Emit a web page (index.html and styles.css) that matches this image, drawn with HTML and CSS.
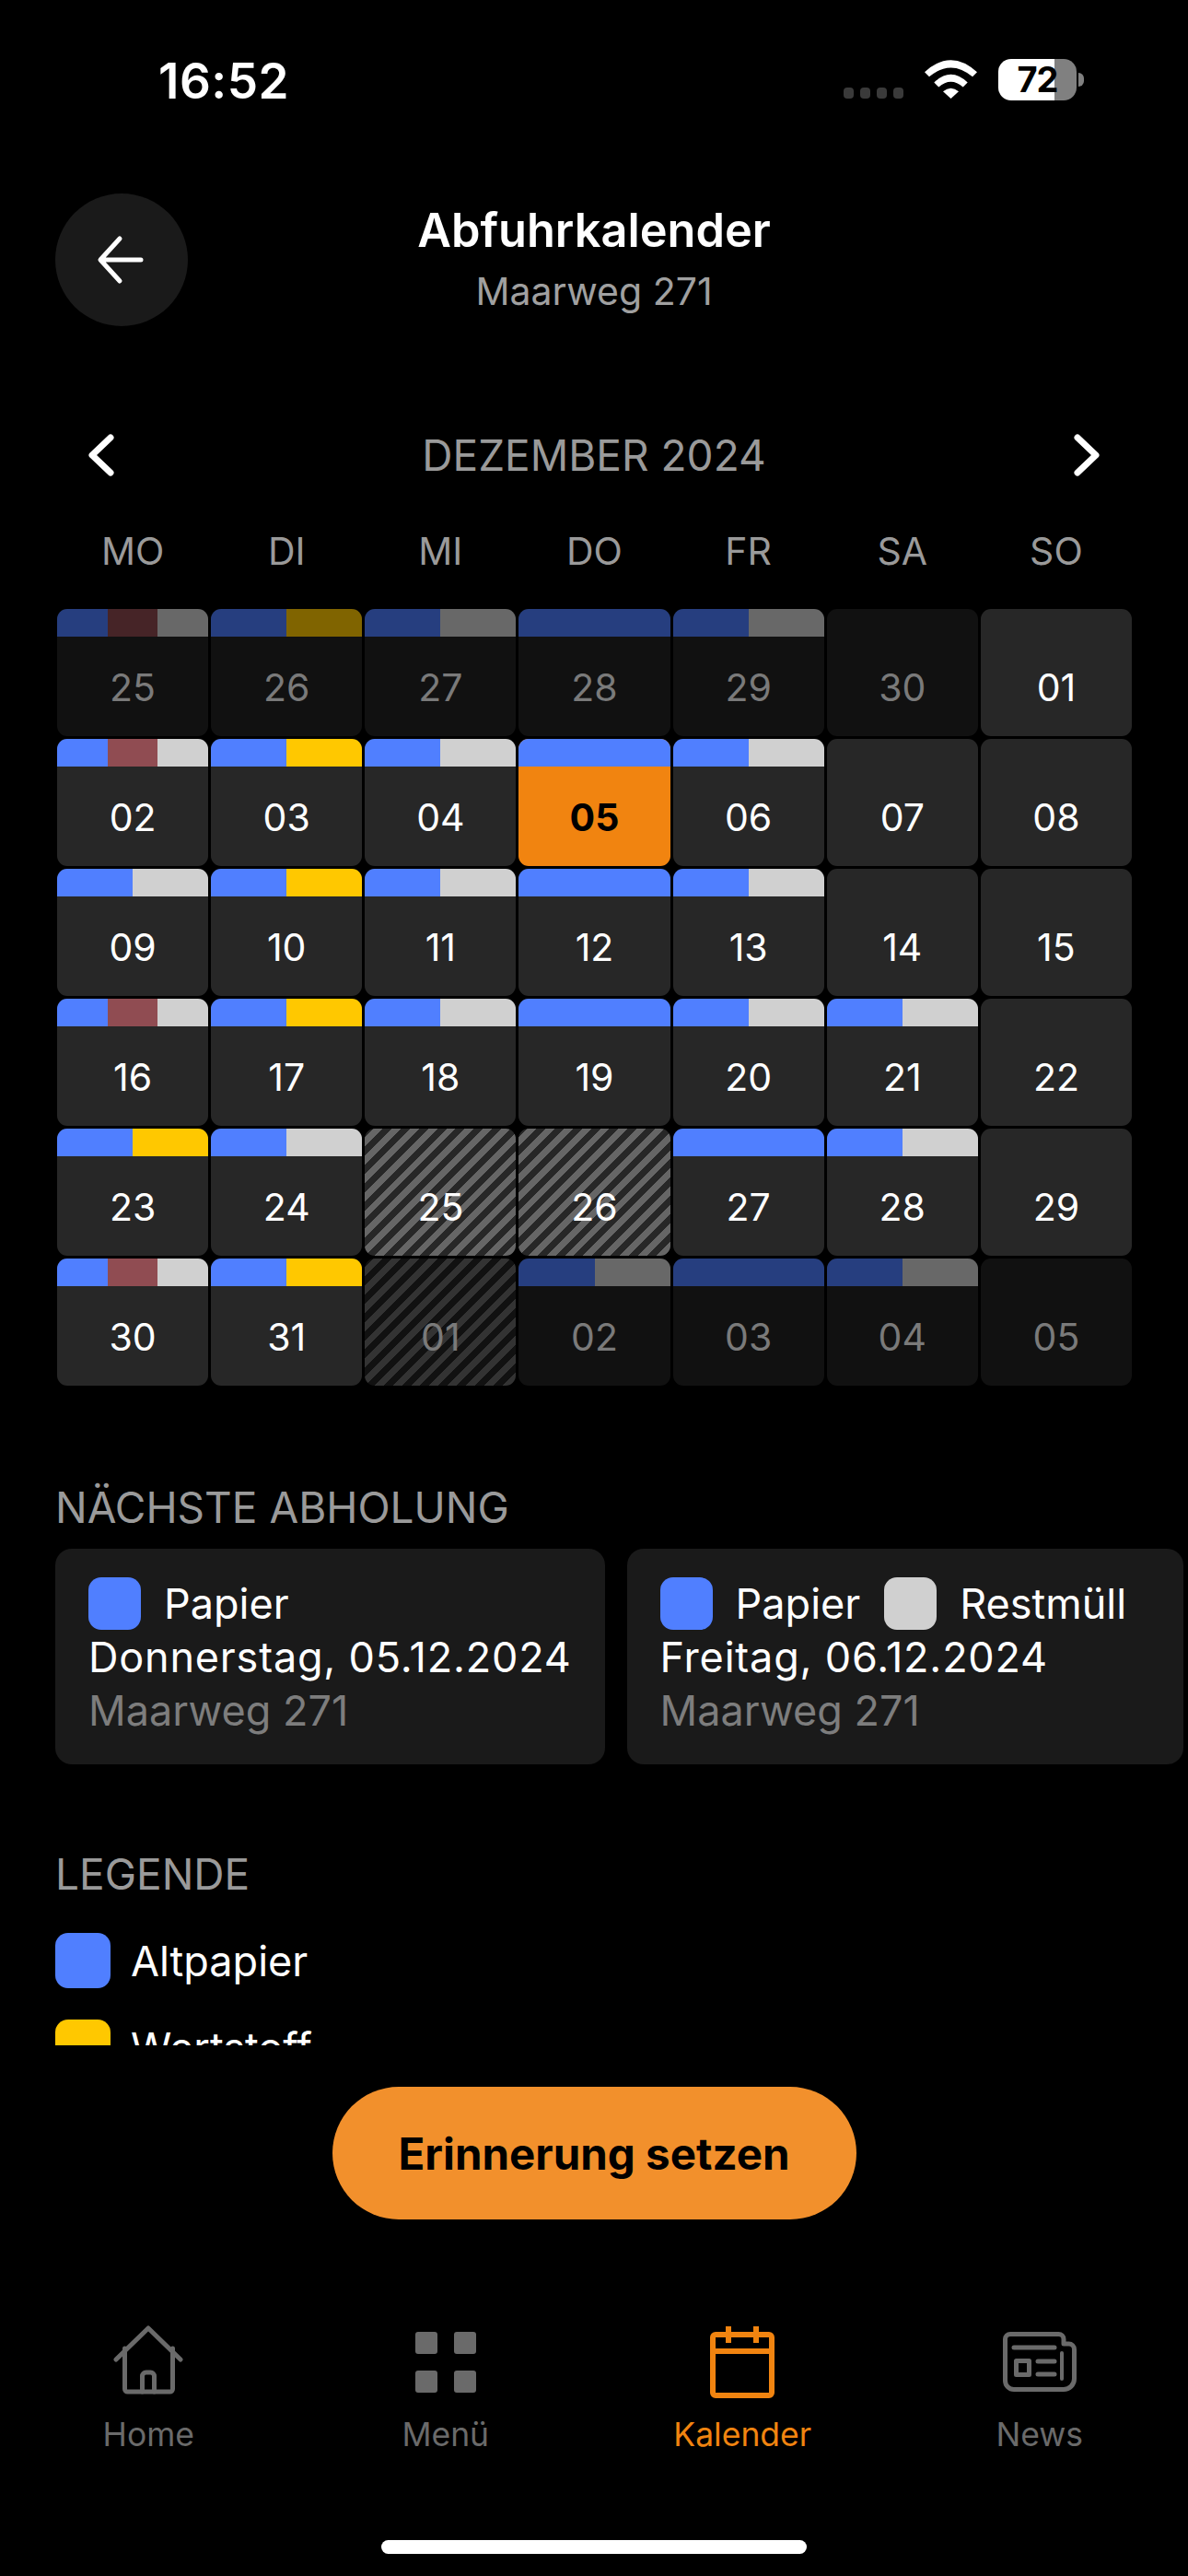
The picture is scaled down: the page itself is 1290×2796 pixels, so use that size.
FILE: index.html
```html
<!DOCTYPE html>
<html lang="de">
<head>
  <meta charset="UTF-8" />
  <title>Abfuhrkalender</title>
  <meta name="viewport" content="width=device-width, initial-scale=1" />
  <link rel="stylesheet" href="styles.css">
</head>
<body>
  <div class="app">
    <div class="statusbar">
      <span class="clock">16:52</span>
      <div class="status-icons">
        <div class="signal"><i></i><i></i><i></i><i></i></div>
        <svg class="wifi" width="57" height="42" viewBox="0 0 57 42" fill="#fff">
          <path d="M0 13.3 Q28.5 -13 57 13.3 L52 18.3 Q28.5 -1.5 5 18.3 Z" />
          <path d="M10.3 24.5 Q28.5 7 46.7 24.5 L41.7 29.5 Q28.5 18 15.3 29.5 Z" />
          <path d="M20 34.3 Q28.5 27 37 34.3 L28.5 42 Z" />
        </svg>
        <div class="battery"><div class="battery-body"><span>72</span></div><div class="battery-nub"></div></div>
      </div>
    </div>

    <div class="scroll">
      <header class="header">
        <button class="back" type="button">
          <svg width="56" height="56" viewBox="0 0 56 56" fill="none" stroke="#fff" stroke-width="5" stroke-linecap="round" stroke-linejoin="round">
            <path d="M28 5 L7 28 L28 51 M8 28 H51" />
          </svg>
        </button>
        <div class="title">
          <h1>Abfuhrkalender</h1>
          <p>Maarweg 271</p>
        </div>
      </header>

      <div class="month">
        <svg width="32" height="46" viewBox="0 0 32 46" fill="none" stroke="#fff" stroke-width="7" stroke-linecap="round" stroke-linejoin="round"><path d="M26 4 L6 23 L26 42" /></svg>
        <span>DEZEMBER 2024</span>
        <svg width="32" height="46" viewBox="0 0 32 46" fill="none" stroke="#fff" stroke-width="7" stroke-linecap="round" stroke-linejoin="round"><path d="M6 4 L26 23 L6 42" /></svg>
      </div>

      <div class="weekdays">
        <span>MO</span><span>DI</span><span>MI</span><span>DO</span><span>FR</span><span>SA</span><span>SO</span>
      </div>

      <div class="calendar">
        <div class="cell dim"><div class="band"><i class="b"></i><i class="r"></i><i class="g"></i></div><span>25</span></div>
        <div class="cell dim"><div class="band"><i class="b"></i><i class="y"></i></div><span>26</span></div>
        <div class="cell dim"><div class="band"><i class="b"></i><i class="g"></i></div><span>27</span></div>
        <div class="cell dim"><div class="band"><i class="b"></i></div><span>28</span></div>
        <div class="cell dim"><div class="band"><i class="b"></i><i class="g"></i></div><span>29</span></div>
        <div class="cell dim"><span>30</span></div>
        <div class="cell"><span>01</span></div>

        <div class="cell"><div class="band"><i class="b"></i><i class="r"></i><i class="g"></i></div><span>02</span></div>
        <div class="cell"><div class="band"><i class="b"></i><i class="y"></i></div><span>03</span></div>
        <div class="cell"><div class="band"><i class="b"></i><i class="g"></i></div><span>04</span></div>
        <div class="cell today"><div class="band"><i class="b"></i></div><span>05</span></div>
        <div class="cell"><div class="band"><i class="b"></i><i class="g"></i></div><span>06</span></div>
        <div class="cell"><span>07</span></div>
        <div class="cell"><span>08</span></div>

        <div class="cell"><div class="band"><i class="b"></i><i class="g"></i></div><span>09</span></div>
        <div class="cell"><div class="band"><i class="b"></i><i class="y"></i></div><span>10</span></div>
        <div class="cell"><div class="band"><i class="b"></i><i class="g"></i></div><span>11</span></div>
        <div class="cell"><div class="band"><i class="b"></i></div><span>12</span></div>
        <div class="cell"><div class="band"><i class="b"></i><i class="g"></i></div><span>13</span></div>
        <div class="cell"><span>14</span></div>
        <div class="cell"><span>15</span></div>

        <div class="cell"><div class="band"><i class="b"></i><i class="r"></i><i class="g"></i></div><span>16</span></div>
        <div class="cell"><div class="band"><i class="b"></i><i class="y"></i></div><span>17</span></div>
        <div class="cell"><div class="band"><i class="b"></i><i class="g"></i></div><span>18</span></div>
        <div class="cell"><div class="band"><i class="b"></i></div><span>19</span></div>
        <div class="cell"><div class="band"><i class="b"></i><i class="g"></i></div><span>20</span></div>
        <div class="cell"><div class="band"><i class="b"></i><i class="g"></i></div><span>21</span></div>
        <div class="cell"><span>22</span></div>

        <div class="cell"><div class="band"><i class="b"></i><i class="y"></i></div><span>23</span></div>
        <div class="cell"><div class="band"><i class="b"></i><i class="g"></i></div><span>24</span></div>
        <div class="cell hatch"><span>25</span></div>
        <div class="cell hatch"><span>26</span></div>
        <div class="cell"><div class="band"><i class="b"></i></div><span>27</span></div>
        <div class="cell"><div class="band"><i class="b"></i><i class="g"></i></div><span>28</span></div>
        <div class="cell"><span>29</span></div>

        <div class="cell"><div class="band"><i class="b"></i><i class="r"></i><i class="g"></i></div><span>30</span></div>
        <div class="cell"><div class="band"><i class="b"></i><i class="y"></i></div><span>31</span></div>
        <div class="cell dim hatch"><span>01</span></div>
        <div class="cell dim"><div class="band"><i class="b"></i><i class="g"></i></div><span>02</span></div>
        <div class="cell dim"><div class="band"><i class="b"></i></div><span>03</span></div>
        <div class="cell dim"><div class="band"><i class="b"></i><i class="g"></i></div><span>04</span></div>
        <div class="cell dim"><span>05</span></div>
      </div>

      <h2 class="section next-title">NÄCHSTE ABHOLUNG</h2>
      <div class="pickups">
        <div class="pickup">
          <div class="chips">
            <div class="chip"><i class="swatch b"></i>Papier</div>
          </div>
          <div class="date">Donnerstag, 05.12.2024</div>
          <div class="addr">Maarweg 271</div>
        </div>
        <div class="pickup">
          <div class="chips">
            <div class="chip"><i class="swatch b"></i>Papier</div>
            <div class="chip"><i class="swatch g"></i>Restmüll</div>
          </div>
          <div class="date">Freitag, 06.12.2024</div>
          <div class="addr">Maarweg 271</div>
        </div>
      </div>

      <h2 class="section legend-title">LEGENDE</h2>
      <div class="legend">
        <div class="legend-item"><i class="swatch b"></i>Altpapier</div>
        <div class="legend-item"><i class="swatch y"></i>Wertstoff</div>
      </div>
    </div>

    <div class="action">
      <button class="remind" type="button">Erinnerung setzen</button>
    </div>

    <nav class="tabs">
      <div class="tab">
        <svg width="84" height="84" viewBox="0 0 84 84" fill="none" stroke="currentColor" stroke-width="5" stroke-linecap="round" stroke-linejoin="round">
          <path d="M7 39 L42 5 L77 39" />
          <path d="M16.5 27 V71 a3 3 0 0 0 3 3 H65.5 a3 3 0 0 0 3-3 V27" />
          <path d="M35.5 74 V57 a4 4 0 0 1 4-4 H44.5 a4 4 0 0 1 4 4 V74" />
        </svg>
        <span>Home</span>
      </div>
      <div class="tab">
        <svg width="84" height="84" viewBox="0 0 84 84" fill="currentColor">
          <rect x="9" y="9" width="24" height="24" rx="3" />
          <rect x="51" y="9" width="24" height="24" rx="3" />
          <rect x="9" y="51" width="24" height="24" rx="3" />
          <rect x="51" y="51" width="24" height="24" rx="3" />
        </svg>
        <span>Menü</span>
      </div>
      <div class="tab active">
        <svg width="84" height="84" viewBox="0 0 84 84" fill="none" stroke="currentColor" stroke-width="6">
          <rect x="10" y="12" width="64" height="66" rx="3" />
          <path d="M10 30 H74" />
          <path d="M27 3 V21 M57 3 V21" />
        </svg>
        <span>Kalender</span>
      </div>
      <div class="tab">
        <svg width="84" height="84" viewBox="0 0 84 84" fill="none" stroke="currentColor" stroke-width="5" stroke-linecap="round" stroke-linejoin="round">
          <path d="M14 71.5 H68 a11.5 11.5 0 0 0 11.5-11.5 V28 a6 6 0 0 0-6-6 H68 V17 a5.5 5.5 0 0 0-5.5-5.5 H10 a5.5 5.5 0 0 0-5.5 5.5 V62 a9.5 9.5 0 0 0 9.5 9.5 Z" />
          <path d="M14 26 H58 M40 41 H58 M40 55 H58" />
          <rect x="16.5" y="40.5" width="14" height="15" />
          <path d="M66 32 V60" stroke-width="4" />
        </svg>
        <span>News</span>
      </div>
    </nav>

    <div class="home-bar"></div>
  </div>
</body>
</html>
```

FILE: styles.css
```css
body {
  margin: 0;
  background: #000;
  font-family: Inter, 'Noto Sans', sans-serif;
  color: #fff;
}

.app {
  width: 1290px;
  height: 2796px;
  display: flex;
  flex-direction: column;
  overflow: hidden;
  background: #000;
}

i {
  display: block;
}

/* status bar */
.statusbar {
  height: 130px;
  flex: none;
  box-sizing: border-box;
  padding: 60px 113px 0 172px;
  display: flex;
  justify-content: space-between;
  align-items: flex-start;
}

.clock {
  font-size: 53px;
  line-height: 56px;
  font-weight: 600;
  letter-spacing: 0.5px;
}

.status-icons {
  display: flex;
  align-items: flex-start;
  padding-top: 4px;
}

.signal {
  display: flex;
  gap: 7px;
  margin: 31px 23px 0 0;
}

.signal i {
  width: 11px;
  height: 12px;
  border-radius: 4px;
  background: #3a3a3a;
}

.wifi {
  margin: 1px 23px 0 0;
}

.battery {
  display: flex;
  align-items: center;
  gap: 2px;
}

.battery-body {
  width: 85px;
  height: 45px;
  border-radius: 14px;
  background: linear-gradient(90deg, #fff 61px, #808080 61px);
  color: #000;
  font-size: 38px;
  font-weight: 700;
  line-height: 45px;
  text-align: center;
  letter-spacing: -1px;
}

.battery-nub {
  width: 6px;
  height: 15px;
  border-radius: 0 8px 8px 0;
  background: #808080;
}

/* scrolling content */
.scroll {
  height: 2090px;
  flex: none;
  box-sizing: border-box;
  padding-top: 80px;
  overflow: hidden;
}

.header {
  display: grid;
  grid-template-columns: 144px 1fr 144px;
  padding: 0 60px;
  height: 144px;
}

.back {
  width: 144px;
  height: 144px;
  border: none;
  border-radius: 50%;
  background: #1a1a1a;
  padding: 0 4px 0 0;
  display: flex;
  align-items: center;
  justify-content: center;
}

.title {
  text-align: center;
}

.title h1 {
  margin: 12px 0 0;
  font-size: 50.5px;
  line-height: 56px;
  font-weight: 600;
}

.title p {
  margin: 12px 0 0;
  font-size: 41px;
  line-height: 52px;
  color: #a0a0a0;
}

.month {
  margin-top: 114px;
  height: 52px;
  padding: 0 94px;
  display: flex;
  justify-content: space-between;
  align-items: center;
  font-size: 46px;
  color: #9a9a9a;
}

.weekdays {
  margin-top: 54px;
  padding: 0 61px 0 62px;
  display: grid;
  grid-template-columns: repeat(7, 1fr);
  column-gap: 3px;
  font-size: 41px;
  line-height: 48px;
  text-align: center;
  color: #9a9a9a;
}

/* calendar grid */
.calendar {
  margin-top: 39px;
  padding: 0 61px 0 62px;
  display: grid;
  grid-template-columns: repeat(7, 1fr);
  grid-auto-rows: 138px;
  gap: 3px;
}

.cell {
  position: relative;
  background: #272727;
  border-radius: 11px;
  overflow: hidden;
  box-sizing: border-box;
  padding-top: 32px;
  display: flex;
  align-items: center;
  justify-content: center;
  font-size: 41px;
}

.band {
  position: absolute;
  top: 0;
  left: 0;
  right: 0;
  height: 30px;
  display: flex;
}

.band i {
  flex: 1;
}

.b { background: #507fff; }
.r { background: #904c52; }
.g { background: #d0d0d0; }
.y { background: #ffc800; }

.cell.dim {
  background: #111;
  color: #7a7a7a;
}

.dim .b { background: #263e7f; }
.dim .r { background: #462427; }
.dim .g { background: #686868; }
.dim .y { background: #806400; }

.cell.today {
  background: #f18410;
  color: #000;
  font-weight: 700;
}

.cell.hatch {
  background: repeating-linear-gradient(135deg, #272727 0 7px, #666 7px 14px);
}

.cell.dim.hatch {
  background: repeating-linear-gradient(135deg, #111 0 7px, #333 7px 14px);
}

/* sections */
.section {
  margin: 0;
  padding: 0 0 0 60px;
  font-size: 46px;
  line-height: 50px;
  font-weight: 400;
  color: #9a9a9a;
}

.next-title {
  margin-top: 107px;
}

.legend-title {
  margin-top: 94px;
}

.pickups {
  margin-top: 20px;
  padding-left: 60px;
  display: flex;
  gap: 24px;
}

.pickup {
  flex: none;
  box-sizing: border-box;
  height: 234px;
  padding: 31px 36px 0 36px;
  border-radius: 18px;
  background: #1a1a1a;
  font-size: 45px;
  line-height: 58px;
}

.chips {
  display: flex;
  height: 57px;
}

.chip {
  display: flex;
  align-items: center;
  gap: 25px;
  margin-right: 26px;
}

.swatch {
  width: 57px;
  height: 57px;
  border-radius: 14px;
}

.date {
  margin-top: 1px;
  letter-spacing: 0.8px;
}

.addr {
  color: #7d7d7d;
}

.legend {
  margin-top: 39px;
  padding-left: 60px;
  display: flex;
  flex-direction: column;
  gap: 34px;
}

.legend-item {
  display: flex;
  align-items: center;
  gap: 22px;
  font-size: 45px;
  height: 60px;
}

.legend-item .swatch {
  width: 60px;
  height: 60px;
}

/* bottom */
.action {
  margin-top: 45px;
  display: flex;
  justify-content: center;
}

.remind {
  width: 569px;
  height: 144px;
  border: none;
  border-radius: 72px;
  background: #f2902c;
  color: #000;
  font-family: inherit;
  font-size: 47.5px;
  font-weight: 700;
}

.tabs {
  margin-top: 113px;
  display: grid;
  grid-template-columns: repeat(4, 1fr);
  color: #6a6a6a;
  font-size: 35.5px;
}

.tab {
  display: flex;
  flex-direction: column;
  align-items: center;
}

.tab svg {
  display: block;
}

.tab span {
  margin-top: 15px;
  line-height: 44px;
}

.tab.active {
  color: #f18410;
}

.home-bar {
  width: 462px;
  height: 15px;
  margin: 92px auto 0;
  border-radius: 8px;
  background: #fff;
}
```
